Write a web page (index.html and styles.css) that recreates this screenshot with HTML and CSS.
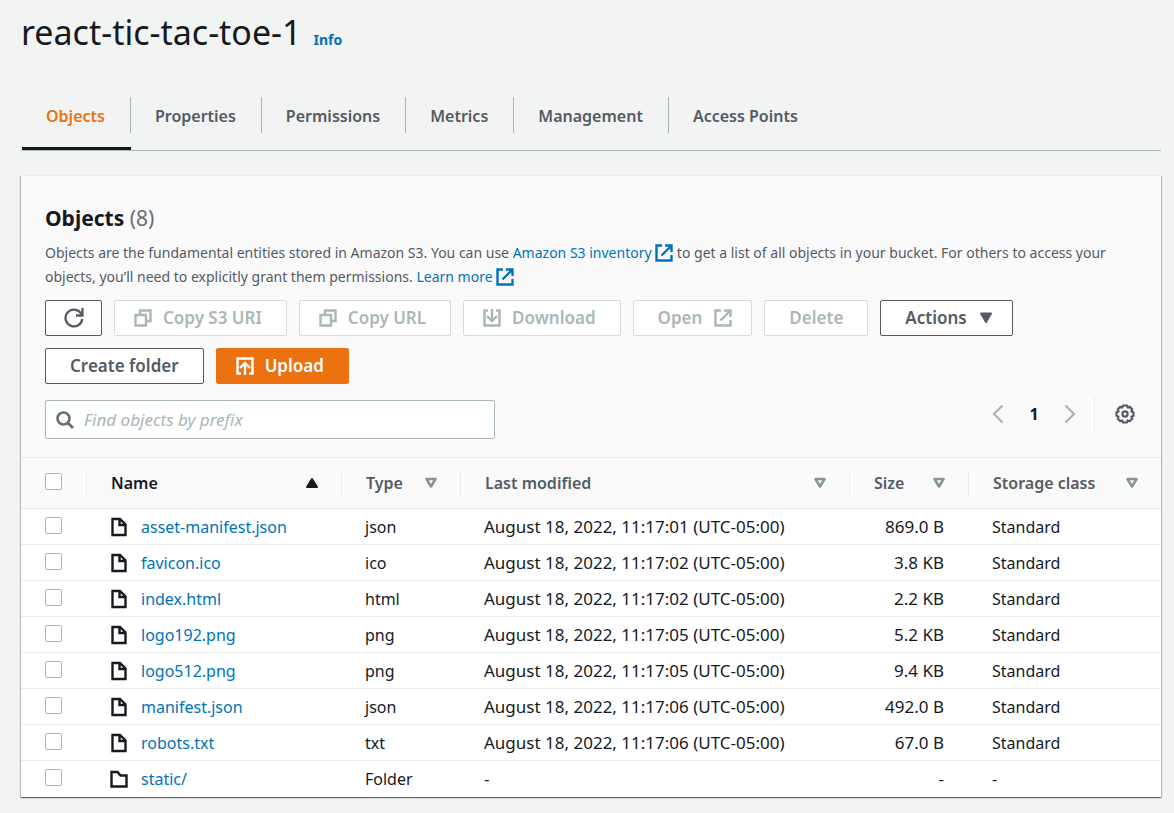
FILE: index.html
```html
<!DOCTYPE html>
<html lang="en">
<head>
<meta charset="utf-8">
<meta name="viewport" content="width=device-width, initial-scale=1">
<title>react-tic-tac-toe-1</title>
<link rel="stylesheet" href="styles.css">
</head>
<body>
<svg class="sprite" aria-hidden="true">
  <symbol id="external" viewBox="0 0 18 18"><path d="M7 1.500H1.500v15h15V11M10 1.500h6.500V8M16 2L6.500 11.500" fill="none" stroke="currentColor" stroke-width="2.400"/></symbol>
  <symbol id="copy" viewBox="0 0 18 18"><path d="M1.500 6h10.500v10.500H1.500zM6 6V1.500h10.500V12H12" fill="none" stroke="currentColor" stroke-width="2.400"/></symbol>
  <symbol id="download" viewBox="0 0 18 18"><path d="M5 1.500H1.500v15h15v-15H13M9 0v11M4 7l5 5 5-5" fill="none" stroke="currentColor" stroke-width="2.400"/></symbol>
  <symbol id="upload" viewBox="0 0 18 18"><path d="M5 16.500H1.500v-15h15v15H13M9 18V7M4 11l5-5 5 5" fill="none" stroke="currentColor" stroke-width="2.400"/></symbol>
  <symbol id="refresh" viewBox="0 0 20 20"><path d="M18.300 11a8.400 8.400 0 1 1-2-6.500l2 2.500M18.500 0v7.500H12" fill="none" stroke="currentColor" stroke-width="2.300"/></symbol>
  <symbol id="search" viewBox="0 0 18 18"><circle cx="7.500" cy="7.500" r="6" fill="none" stroke="currentColor" stroke-width="2.600"/><path d="M12 12l5 5" stroke="currentColor" stroke-width="2.800"/></symbol>
  <symbol id="file" viewBox="0 0 18 20"><path d="M2.500 2H10l5.500 5.500V18h-13zM9.500 2v6h6" fill="none" stroke="currentColor" stroke-width="2.400"/></symbol>
  <symbol id="folder" viewBox="0 0 18 20"><path d="M1.500 3h6l3 3.500h6V17.500h-15z" fill="none" stroke="currentColor" stroke-width="2.400"/></symbol>
  <symbol id="down" viewBox="0 0 14 12"><path d="M2 1.500h10L7 10z" fill="currentColor" stroke="currentColor" stroke-width="2" stroke-linejoin="round"/></symbol>
  <symbol id="up" viewBox="0 0 14 12"><path d="M2 10h10L7 2z" fill="currentColor" stroke="currentColor" stroke-width="2" stroke-linejoin="round"/></symbol>
  <symbol id="sort" viewBox="0 0 14 12"><path d="M2.500 2h9L7 9.500z" fill="none" stroke="currentColor" stroke-width="2.600" stroke-linejoin="round"/></symbol>
  <symbol id="prev" viewBox="0 0 12 20"><path d="M10.500 1.500L2 10l8.500 8.500" fill="none" stroke="currentColor" stroke-width="2.300"/></symbol>
  <symbol id="next" viewBox="0 0 12 20"><path d="M1.500 1.500L10 10l-8.500 8.500" fill="none" stroke="currentColor" stroke-width="2.300"/></symbol>
  <symbol id="gear" viewBox="0 0 20 20"><path d="M8 1.500h4l.8 2 2-.7 2.500 2.600-.9 2 2.100.8v3.600l-2.100.8.9 2-2.600 2.600-2-.8-.7 2.100H8l-.8-2.100-2 .8-2.500-2.600.8-2-2-.8V8.200l2-.8-.8-2 2.500-2.600 2 .7z" fill="none" stroke="currentColor" stroke-width="2.200" stroke-linejoin="round"/><circle cx="10" cy="10" r="2.600" fill="none" stroke="currentColor" stroke-width="2.200"/></symbol>
</svg>
<main class="page">
  <header class="title">
    <h1>react-tic-tac-toe-1</h1>
    <a class="info" href="#">Info</a>
  </header>
  <nav class="tabs" aria-label="Bucket sections">
    <a class="tab active" href="#" aria-current="page"><span>Objects</span></a>
    <a class="tab" href="#"><span>Properties</span></a>
    <a class="tab" href="#"><span>Permissions</span></a>
    <a class="tab" href="#"><span>Metrics</span></a>
    <a class="tab" href="#"><span>Management</span></a>
    <a class="tab" href="#"><span>Access Points</span></a>
  </nav>
  <section class="panel">
    <div class="panel-head">
      <h2>Objects <span class="count">(8)</span></h2>
      <p class="description">Objects are the fundamental entities stored in Amazon S3. You can use <a href="#">Amazon S3 inventory <svg class="icon"><use href="#external"/></svg></a> to get a list of all objects in your bucket. For others to access your objects, you’ll need to explicitly grant them permissions. <a href="#">Learn more <svg class="icon"><use href="#external"/></svg></a></p>
      <div class="actions">
        <button class="btn icon-only" aria-label="Refresh"><svg class="icon-lg"><use href="#refresh"/></svg></button>
        <button class="btn lead" disabled><svg class="icon"><use href="#copy"/></svg>Copy S3 URI</button>
        <button class="btn lead" disabled><svg class="icon"><use href="#copy"/></svg>Copy URL</button>
        <button class="btn lead" disabled><svg class="icon"><use href="#download"/></svg>Download</button>
        <button class="btn trail" disabled>Open<svg class="icon"><use href="#external"/></svg></button>
        <button class="btn" disabled>Delete</button>
        <button class="btn trail">Actions<svg class="caret"><use href="#down"/></svg></button>
        <button class="btn">Create folder</button>
        <button class="btn lead primary"><svg class="icon"><use href="#upload"/></svg>Upload</button>
      </div>
      <div class="tools">
        <label class="search"><svg class="icon"><use href="#search"/></svg><input type="search" placeholder="Find objects by prefix" aria-label="Find objects by prefix"></label>
        <div class="pager">
          <button class="plain" aria-label="Previous page"><svg class="chevron"><use href="#prev"/></svg></button>
          <button class="plain current">1</button>
          <button class="plain" aria-label="Next page"><svg class="chevron"><use href="#next"/></svg></button>
          <button class="plain settings" aria-label="Settings"><svg class="icon-lg"><use href="#gear"/></svg></button>
        </div>
      </div>
    </div>
    <table>
      <colgroup><col class="c-check"><col class="c-name"><col class="c-type"><col><col class="c-size"><col class="c-class"></colgroup>
      <thead>
        <tr>
          <th><input type="checkbox" aria-label="Select all"></th>
          <th class="sorted" aria-sort="ascending"><div class="head">Name<svg class="caret"><use href="#up"/></svg></div></th>
          <th><div class="head">Type<svg class="caret"><use href="#sort"/></svg></div></th>
          <th><div class="head">Last modified<svg class="caret"><use href="#sort"/></svg></div></th>
          <th><div class="head">Size<svg class="caret"><use href="#sort"/></svg></div></th>
          <th><div class="head">Storage class<svg class="caret"><use href="#sort"/></svg></div></th>
        </tr>
      </thead>
      <tbody>
        <tr><td><input type="checkbox" aria-label="Select asset-manifest.json"></td><td><a class="object" href="#"><svg class="type-icon"><use href="#file"/></svg>asset-manifest.json</a></td><td>json</td><td class="date">August 18, 2022, 11:17:01 (UTC-05:00)</td><td class="num">869.0 B</td><td>Standard</td></tr>
        <tr><td><input type="checkbox" aria-label="Select favicon.ico"></td><td><a class="object" href="#"><svg class="type-icon"><use href="#file"/></svg>favicon.ico</a></td><td>ico</td><td class="date">August 18, 2022, 11:17:02 (UTC-05:00)</td><td class="num">3.8 KB</td><td>Standard</td></tr>
        <tr><td><input type="checkbox" aria-label="Select index.html"></td><td><a class="object" href="#"><svg class="type-icon"><use href="#file"/></svg>index.html</a></td><td>html</td><td class="date">August 18, 2022, 11:17:02 (UTC-05:00)</td><td class="num">2.2 KB</td><td>Standard</td></tr>
        <tr><td><input type="checkbox" aria-label="Select logo192.png"></td><td><a class="object" href="#"><svg class="type-icon"><use href="#file"/></svg>logo192.png</a></td><td>png</td><td class="date">August 18, 2022, 11:17:05 (UTC-05:00)</td><td class="num">5.2 KB</td><td>Standard</td></tr>
        <tr><td><input type="checkbox" aria-label="Select logo512.png"></td><td><a class="object" href="#"><svg class="type-icon"><use href="#file"/></svg>logo512.png</a></td><td>png</td><td class="date">August 18, 2022, 11:17:05 (UTC-05:00)</td><td class="num">9.4 KB</td><td>Standard</td></tr>
        <tr><td><input type="checkbox" aria-label="Select manifest.json"></td><td><a class="object" href="#"><svg class="type-icon"><use href="#file"/></svg>manifest.json</a></td><td>json</td><td class="date">August 18, 2022, 11:17:06 (UTC-05:00)</td><td class="num">492.0 B</td><td>Standard</td></tr>
        <tr><td><input type="checkbox" aria-label="Select robots.txt"></td><td><a class="object" href="#"><svg class="type-icon"><use href="#file"/></svg>robots.txt</a></td><td>txt</td><td class="date">August 18, 2022, 11:17:06 (UTC-05:00)</td><td class="num">67.0 B</td><td>Standard</td></tr>
        <tr><td><input type="checkbox" aria-label="Select static/"></td><td><a class="object" href="#"><svg class="type-icon"><use href="#folder"/></svg>static/</a></td><td>Folder</td><td class="date">-</td><td class="num">-</td><td>-</td></tr>
      </tbody>
    </table>
  </section>
</main>
</body>
</html>
```
FILE: styles.css
```css
* { box-sizing: border-box; }
body {
  margin: 0;
  background: #f2f3f3;
  color: #16191f;
  font: 16px/24px "Noto Sans", "Open Sans", sans-serif;
}
a { color: #0073bb; text-decoration: none; }
svg { flex: none; }
.sprite { position: absolute; width: 0; height: 0; }
.icon { width: 18px; height: 18px; }
.icon-lg { width: 20px; height: 20px; }
.caret { width: 14px; height: 12px; }
.page { padding: 12px 13px 16px 21px; }

.title { display: flex; align-items: baseline; gap: 12px; }
h1 { margin: 0; font-size: 34px; font-weight: 400; line-height: 40px; }
.info { font-size: 14px; font-weight: 700; }

.tabs { display: flex; margin-top: 45px; border-bottom: 1px solid #aab7b8; }
.tab { display: flex; height: 53px; align-items: flex-start; color: #545b64; font-weight: 600; }
.tab span { height: 36px; padding: 7px 25px 0 24px; line-height: 24px; border-right: 1px solid #aab7b8; }
.tab:last-child span { border-right: 0; }
.tab.active { margin-left: 1px; border-bottom: 3px solid #16191f; color: #ec7211; }

.panel {
  margin-top: 24px;
  background: #fff;
  border-top: 1px solid #eaeded;
  box-shadow: 0 1px 1px #001c2466, 1px 1px 1px #001c2433, -1px 1px 1px #001c2433;
}
.panel-head { padding: 30px 24px 18px; background: #fafafa; }
h2 { margin: 0; font-size: 21px; font-weight: 700; line-height: 24px; }
.count { color: #687078; font-weight: 400; }
.description { margin: 11px 0 0; color: #545b64; font-size: 14px; line-height: 24px; }
.description .icon { vertical-align: -4px; }

.actions { display: flex; flex-wrap: wrap; gap: 12px; margin-top: 11px; }
.btn {
  display: flex;
  align-items: center;
  justify-content: center;
  height: 36px;
  padding: 0 24px;
  border: 1px solid #545b64;
  border-radius: 2px;
  background: #fff;
  color: #545b64;
  font: 600 17px/24px "Noto Sans", "Open Sans", sans-serif;
}
.btn:disabled { border-color: #d5dbdb; color: #aab7b8; }
.icon-only { width: 57px; padding: 0; }
.lead { gap: 11px; padding-left: 19px; }
.trail { gap: 12px; padding-right: 19px; }
.primary { border-color: #ec7211; background: #ec7211; color: #fff; }

.tools { display: flex; align-items: flex-start; justify-content: space-between; gap: 24px; margin-top: 16px; }
.search {
  display: flex;
  flex: 0 1 450px;
  align-items: center;
  gap: 10px;
  height: 39px;
  padding: 0 10px;
  border: 1px solid #aab7b8;
  border-radius: 2px;
  background: #fff;
  color: #687078;
}
.search input { flex: 1; min-width: 0; padding: 0; border: 0; outline: 0; background: transparent; font: 17px/24px "Noto Sans", "Open Sans", sans-serif; }
.search input::placeholder { color: #aab7b8; font-style: italic; opacity: 1; }
.pager { display: flex; height: 36px; margin-top: -4px; }
.plain { display: flex; width: 36px; align-items: center; justify-content: center; padding: 0; border: 0; background: transparent; color: #aab7b8; font: 700 16px/24px "Noto Sans", "Open Sans", sans-serif; }
.chevron { width: 12px; height: 20px; }
.current { color: #16191f; }
.settings { width: 43px; margin-left: 6px; padding-left: 18px; border-left: 1px solid #eaeded; color: #545b64; }

table { width: 100%; border-collapse: separate; border-spacing: 0; table-layout: fixed; }
.c-check { width: 65px; }
.c-name { width: 255px; }
.c-type, .c-size { width: 119px; }
.c-class { width: 193px; }
th { height: 52px; padding: 0; border: solid #eaeded; border-width: 1px 0; background: #fafafa; color: #545b64; font-weight: 600; text-align: left; }
.head { display: flex; align-items: center; justify-content: space-between; height: 26px; padding: 0 22px 0 24px; border-left: 1px solid #eaeded; }
.head .caret { color: #879596; }
.sorted, .sorted .head .caret { color: #16191f; }
td { height: 36px; padding: 0 24px; border-bottom: 1px solid #eaeded; white-space: nowrap; }
th:first-child, td:first-child { padding: 0 0 3px 24px; }
tbody tr:last-child td { border-bottom: 0; }
.date, .num { font-size: 17px; }
.num { text-align: right; }
.object { display: flex; align-items: center; gap: 13px; }
.type-icon { width: 18px; height: 20px; color: #16191f; }
input[type="checkbox"] { display: block; width: 17px; height: 17px; margin: 0; border: 1px solid #aab7b8; border-radius: 2px; background: #fff; appearance: none; }
```
